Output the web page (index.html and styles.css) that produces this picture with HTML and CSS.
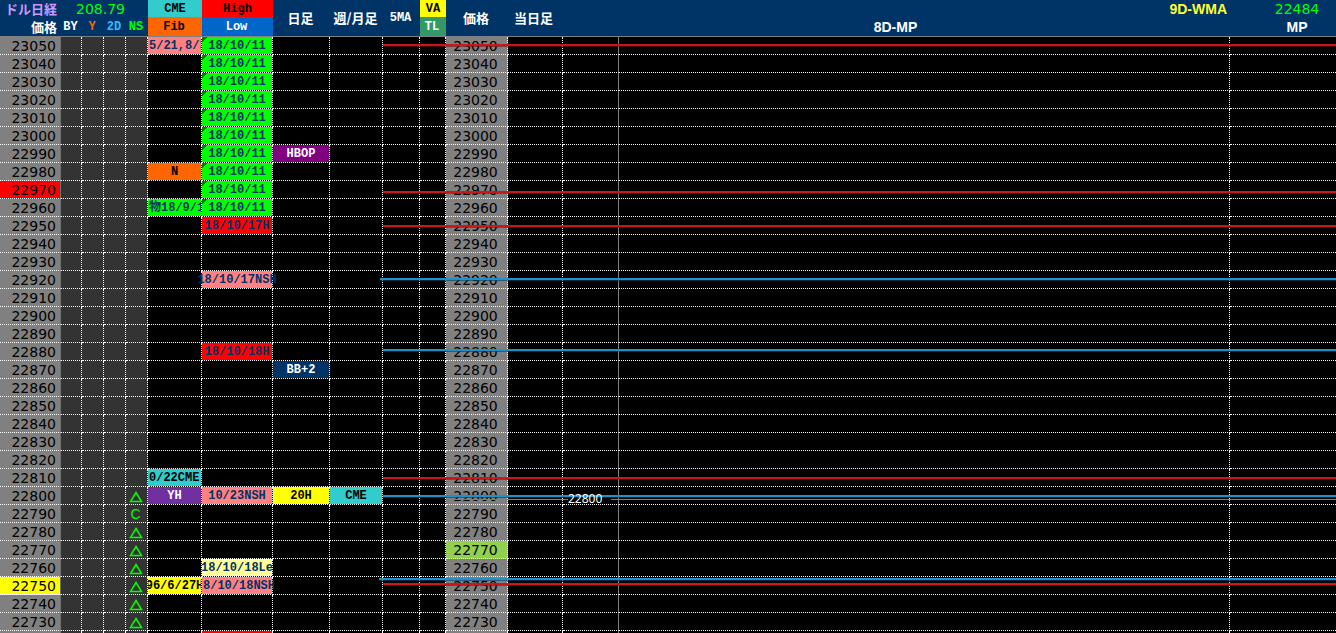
FILE: index.html
```html
<!DOCTYPE html>
<html lang="ja">
	<head>
		<meta charset="utf-8">
		<meta name="viewport" content="width=device-width, initial-scale=1">

		<title>日経 価格ボード</title>

		<link rel="stylesheet" href="styles.css">
	</head>
	<body>
	<div class="board">
		<table>
			<colgroup>
				<col class="c-price">
				<col class="c-by">
				<col class="c-flag">
				<col class="c-flag">
				<col class="c-flag">
				<col class="c-fib">
				<col class="c-high">
				<col class="c-day">
				<col class="c-week">
				<col class="c-ma">
				<col class="c-va">
				<col class="c-price2">
				<col class="c-today">
				<col class="c-label">
				<col>
				<col class="c-mp">
			</colgroup>
			<thead>
				<tr>
					<th class="usd">ドル日経</th>
					<th class="quote usd-quote" colspan="4">208.79</th>
					<th class="cyan">CME</th>
					<th class="red">High</th>
					<th class="jp" rowspan="2">日足</th>
					<th class="jp" rowspan="2">週/月足</th>
					<th rowspan="2">5MA</th>
					<th class="yellow">VA</th>
					<th class="jp" rowspan="2">価格</th>
					<th class="jp left" rowspan="2">当日足</th>
					<th></th>
					<th class="wma">9D-WMA</th>
					<th class="quote last">22484</th>
				</tr>
				<tr class="second">
					<th class="jp right">価格</th>
					<th>BY</th>
					<th class="text-orange">Y</th>
					<th class="text-blue">2D</th>
					<th class="text-green">NS</th>
					<th class="orange">Fib</th>
					<th class="blue">Low</th>
					<th class="teal">TL</th>
					<th class="mp" colspan="2">8D-MP</th>
					<th class="mp last">MP</th>
				</tr>
			</thead>
			<tbody id="rows"></tbody>
		</table>

		<div class="line red-line l1"></div>
		<div class="line red-line l2"></div>
		<div class="line red-line l3"></div>
		<div class="line blue-line l4"></div>
		<div class="line blue-line l5"></div>
		<div class="line red-line l6"></div>
		<div class="line blue-line l7"></div>
		<div class="line blue-line l8"></div>
		<div class="line red-line l9"></div>
		<div class="pivot"><span>22800</span></div>
	</div>

	<script src="board.js"></script>
	</body>
</html>
```

FILE: styles.css
```css
* {
	box-sizing: border-box;
}

body {
	margin: 0;
	background: #000;
	color: #fff;

	font-family: "Liberation Mono", "Noto Sans CJK JP", monospace;
	font-size: 12px;
	line-height: 16px;
}

.board {
	position: relative;
	height: 100vh;
	overflow: hidden;
}

table {
	width: 100%;
	table-layout: fixed;
	border-collapse: separate;
	border-spacing: 0;
}

.c-price { width: 61px; }
.c-by { width: 21px; }
.c-flag { width: 22px; }
.c-fib { width: 54px; }
.c-high { width: 71px; }
.c-day { width: 57px; }
.c-week { width: 53px; }
.c-ma { width: 37px; }
.c-va { width: 26px; }
.c-price2 { width: 62px; }
.c-today { width: 55px; }
.c-label { width: 56px; }
.c-mp { width: 106px; }

th, td {
	padding: 0;
	text-align: center;
	white-space: nowrap;
}

/* Header */
th {
	height: 17px;
	background: #003366;
	font-weight: bold;
}

.second th {
	height: 20px;
	padding-top: 1px;
	padding-right: 2px;
}

.second th, th[rowspan] {
	border-bottom: 1px solid #808080;
}

th[rowspan] {
	padding-right: 2px;
}

th.usd, th.jp {
	font-family: "Noto Sans CJK JP", sans-serif;
	font-size: 13px;
}

th.usd {
	padding-right: 4px;
	color: #cc99ff;
	text-align: right;
}

.second th.right {
	padding-right: 4px;
	text-align: right;
}

th.left {
	padding-left: 6px;
	text-align: left;
}

th.quote {
	color: #00ff00;
	font-family: "DejaVu Sans", sans-serif;
	font-size: 14px;
	font-weight: normal;
}

th.usd-quote {
	padding-right: 8px;
}

th.wma, th.mp {
	font-family: "Liberation Sans", sans-serif;
	font-size: 14px;
}

th.wma {
	padding-right: 3px;
	color: #ffff33;
	text-align: right;
}

th.last, .second th.last {
	padding-right: 0;
	padding-left: 28px;
}

.text-orange { color: #ff6600; }
.text-blue { color: #33bbff; }
.text-green { color: #00ff00; }

/* Grid */
td {
	height: 18px;
	border-right: 1px dotted #fff;
	border-bottom: 1px dotted #fff;
	line-height: 15px;
}

td.price {
	padding-top: 2px;
	padding-right: 2px;
	background: #808080;
	color: #000;
	font-family: "DejaVu Sans", sans-serif;
	font-size: 14px;
}

td.price:first-child {
	padding-right: 4px;
	border-right: 1px solid #707070;
	text-align: right;
}

td.flag {
	padding-top: 2px;
	padding-right: 2px;
	background: #333;
	color: #00ff00;
	font-family: "Liberation Sans", "DejaVu Sans", sans-serif;
	font-size: 14px;
}

td.flag svg {
	display: block;
	margin: 0 auto;
}

td.label {
	border-right: 1px solid #808080;
}

td:last-child {
	border-right: 0;
}

.tag {
	display: flex;
	justify-content: center;
	height: 17px;
	padding-top: 2px;
	overflow: hidden;
	font-weight: bold;
}

.tag.start {
	justify-content: flex-start;
	padding-left: 1px;
}

.tag.wide {
	position: relative;
	overflow: visible;
}

th.red, .red { background: #ff0000; }
th.cyan, .cyan { background: #33cccc; }
th.yellow, .yellow { background: #ffff00; }
th.orange, .orange { background: #ff6600; }
th.blue { background: #0066cc; }
th.teal { background: #339966; }
th.cyan, th.red, th.yellow, th.orange { color: #000; }

.tag { color: #003366; }
.tag.orange, .tag.yellow, .tag.cyan { color: #000; }
.pink { background: #ff8080; }
.green { background: #00ff00; }
.cream { background: #ffff99; }
.purple { background: #800080; }
.violet { background: #7030a0; }
.navy { background: #003366; }
.tag.purple, .tag.violet, .tag.navy { color: #fff; }

/* Comment corner */
.note {
	background: linear-gradient(135deg, #008000 4px, #00ff00 4px);
}

td.price.is-red { background: #ff0000; }
td.price.is-yellow { background: #ffff00; }
td.price.is-lime { background: #92d050; }

/* Levels drawn over the grid */
.line {
	position: absolute;
	left: 383px;
	right: 0;
	height: 2px;
}

.red-line {
	background: #c8181c;
	box-shadow: 0 1px 0 rgba(120,0,0,0.5);
}

.blue-line {
	background: #2090c8;
	box-shadow: 0 1px 0 rgba(0,60,110,0.6);
}

.l1 { top: 44px; }
.l2 { top: 191px; }
.l3 { top: 225px; }
.l4 { top: 278px; left: 380px; }
.l5 { top: 349px; }
.l6 { top: 477px; }
.l7 { top: 495px; }
.l8 { top: 578px; left: 379px; }
.l9 { top: 583px; }

.pivot {
	position: absolute;
	top: 491px;
	left: 450px;
	right: 0;
	display: flex;
	align-items: center;
	font-family: "Noto Sans", sans-serif;
	font-size: 12px;
}

.pivot::before, .pivot::after {
	content: "";
	height: 1px;
	background: #808080;
}

.pivot::before {
	width: 118px;
}

.pivot::after {
	flex: 1;
	margin-left: 9px;
}
```

FILE: board.js
```js
var TOP = 23050;
var STEP = 10;
var COUNT = 34;

// price: { column: [text, classes] }
var tags = {
	23050: { fib: ['5/21,8/3', 'pink start'] },
	22990: { day: ['HBOP', 'purple'] },
	22980: { fib: ['N', 'orange'] },
	22960: { fib: ['物18/9/1', 'green start'] },
	22950: { high: ['18/10/17H', 'red'] },
	22920: { high: ['18/10/17NSH', 'pink wide'] },
	22880: { high: ['18/10/18H', 'red'] },
	22870: { day: ['BB+2', 'navy'] },
	22810: { fib: ['0/22CME', 'cyan start'] },
	22800: { fib: ['YH', 'violet'], high: ['10/23NSH', 'pink'], day: ['20H', 'yellow'], week: ['CME', 'cyan'] },
	22760: { high: ['18/10/18Le', 'cream'] },
	22750: { fib: ['96/6/27H', 'yellow'], high: ['8/10/18NSH', 'pink start wide'] },
	22720: { high: ['', 'red'] }
};

var left = { 22970: 'is-red', 22750: 'is-yellow' };
var right = { 22770: 'is-lime' };
var triangle = '<svg width="14" height="13" viewBox="0 0 14 13"><path d="M7 2.5L12.5 11.5H1.5Z" fill="none" stroke="#00ff00" stroke-width="1.5"/></svg>';

function tag(price, column) {
	var item = tags[price] && tags[price][column];

	if (!item && column === 'high' && price >= 22960) {
		item = ['18/10/11', 'note'];
	}

	return '<td>' + (item ? '<span class="tag ' + item[1] + '">' + item[0] + '</span>' : '') + '</td>';
}

function flag(price) {
	if (price > 22800) return '';
	return price === 22790 ? 'C' : triangle;
}

var html = '';

for (var i = 0; i < COUNT; i++) {
	var price = TOP - i * STEP;

	html += '<tr><td class="price ' + (left[price] || '') + '">' + price + '</td>' +
		'<td class="flag"></td><td class="flag"></td><td class="flag"></td>' +
		'<td class="flag">' + flag(price) + '</td>' +
		tag(price, 'fib') + tag(price, 'high') + tag(price, 'day') + tag(price, 'week') +
		'<td></td><td></td>' +
		'<td class="price ' + (right[price] || '') + '">' + price + '</td>' +
		'<td></td><td class="label"></td><td></td><td></td></tr>';
}

document.getElementById('rows').innerHTML = html;
```
